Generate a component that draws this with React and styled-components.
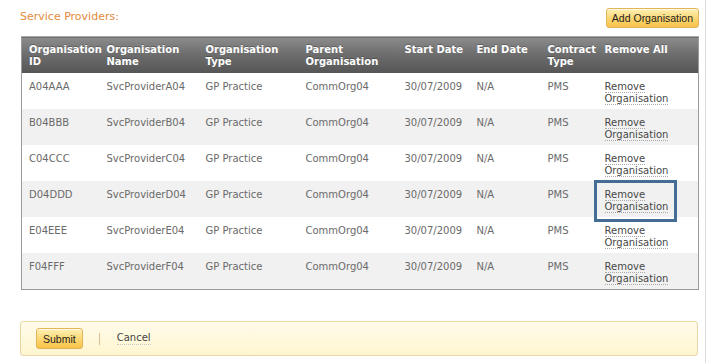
import React from "react";
import styled, { createGlobalStyle } from "styled-components";

const Global = createGlobalStyle`
  html, body { margin: 0; padding: 0; background: #fff; }
  body { font-family: "DejaVu Sans", Verdana, sans-serif; }
`;

const Page = styled.div`
  width: 706px;
  height: 363px;
  box-sizing: border-box;
  border-right: 1px solid #dcdcdc;
  padding: 8px 8px 0 20px;
`;

const TopBar = styled.div`
  display: flex;
  justify-content: space-between;
  align-items: center;
  height: 19px;
  width: 679px;
`;

const Title = styled.h2`
  margin: 0 0 2px 0;
  font-size: 11px;
  font-weight: normal;
  color: #e38b3d;
  line-height: 14px;
`;

const YellowButton = styled.button`
  font-family: "Liberation Sans", Arial, sans-serif;
  font-size: 10.5px;
  color: #222;
  height: ${(p) => p.$h}px;
  padding: 0 ${(p) => p.$px}px;
  border: 1px solid #e2b55a;
  border-radius: 3px;
  background: linear-gradient(#fff0b5, #fcd66f 55%, #f7c24a);
  box-shadow: inset 0 1px 0 rgba(255,255,255,0.6);
  cursor: pointer;
`;

const Table = styled.table`
  margin: 9px 0 0 1px;
  width: 677px;
  border-collapse: collapse;
  table-layout: fixed;
  border: 1px solid #9a9a9a;
  font-size: 10px;
`;

const Th = styled.th`
  text-align: left;
  vertical-align: top;
  font-weight: bold;
  color: #fff;
  line-height: 12px;
  padding: 7px 4px 5px 7px;
  height: 24px;
  background: linear-gradient(#8c8c8c, #6e6e6e 45%, #555);
  border-top: 1px solid #a9a9a9;
  text-shadow: 0 -1px 0 rgba(0,0,0,0.25);
`;

const Tr = styled.tr`
  background: ${(p) => (p.$alt ? "#f1f1f1" : "#fff")};
`;

const Td = styled.td`
  vertical-align: top;
  color: #6a6a6a;
  line-height: 12px;
  padding: 8px 4px 4px 7px;
  height: 24px;
`;

const RemoveLink = styled.a`
  position: relative;
  display: inline-block;
  color: #474747;
  text-decoration: none;
  span {
    border-bottom: 1px dotted #a8a8a8;
  }
  ${(p) =>
    p.$focused &&
    `
    &::after {
      content: "";
      position: absolute;
      left: -11px;
      right: -9px;
      top: -9px;
      bottom: -9px;
      border: 3px solid #456c93;
    }
  `}
`;

const Footer = styled.div`
  margin-top: 31px;
  width: 678px;
  height: 35px;
  box-sizing: border-box;
  display: flex;
  align-items: center;
  padding-left: 15px;
  border: 1px solid #ead7a8;
  border-radius: 3px;
  background: linear-gradient(#fffbea, #fff6cf);
`;

const Sep = styled.span`
  width: 1px;
  height: 12px;
  background: #dcbf8e;
  margin: 0 17px 0 16px;
`;

const CancelLink = styled.a`
  font-size: 10px;
  color: #444;
  text-decoration: none;
  border-bottom: 1px dotted #c8c8c8;
  line-height: 12px;
`;

const cols = [78, 99, 100, 99, 72, 71, 57, 101];
const headers = [
  ["Organisation", "ID"],
  ["Organisation", "Name"],
  ["Organisation", "Type"],
  ["Parent", "Organisation"],
  ["Start Date"],
  ["End Date"],
  ["Contract", "Type"],
  ["Remove All"],
];

const rows = ["A", "B", "C", "D", "E", "F"].map((l) => ({
  id: `${l}04${l}${l}${l}`,
  name: `SvcProvider${l}04`,
}));

export default function App() {
  return (
    <>
      <Global />
      <Page>
        <TopBar>
          <Title>Service Providers:</Title>
          <YellowButton $h={20} $px={5}>Add Organisation</YellowButton>
        </TopBar>
        <Table>
          <colgroup>
            {cols.map((w, i) => (
              <col key={i} style={{ width: w }} />
            ))}
          </colgroup>
          <thead>
            <tr>
              {headers.map((h, i) => (
                <Th key={i}>
                  {h.map((t, j) => (
                    <React.Fragment key={j}>
                      {j > 0 && <br />}
                      {t}
                    </React.Fragment>
                  ))}
                </Th>
              ))}
            </tr>
          </thead>
          <tbody>
            {rows.map((r, i) => (
              <Tr key={r.id} $alt={i % 2 === 1}>
                <Td>{r.id}</Td>
                <Td>{r.name}</Td>
                <Td>GP Practice</Td>
                <Td>CommOrg04</Td>
                <Td>30/07/2009</Td>
                <Td>N/A</Td>
                <Td>PMS</Td>
                <Td>
                  <RemoveLink href="#" $focused={i === 3}>
                    <span>Remove</span>
                    <br />
                    <span>Organisation</span>
                  </RemoveLink>
                </Td>
              </Tr>
            ))}
          </tbody>
        </Table>
        <Footer>
          <YellowButton $h={21} $px={6}>Submit</YellowButton>
          <Sep />
          <CancelLink href="#">Cancel</CancelLink>
        </Footer>
      </Page>
    </>
  );
}
